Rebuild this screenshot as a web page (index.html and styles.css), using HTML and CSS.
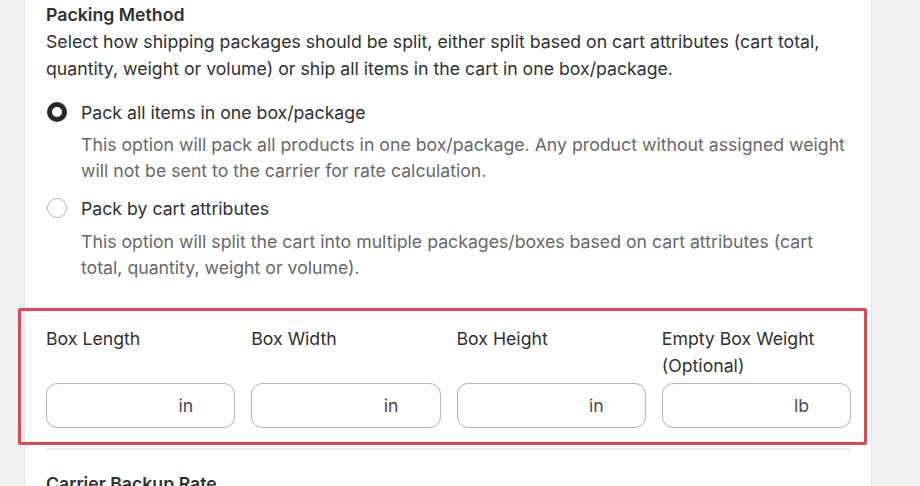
FILE: index.html
```html
<!DOCTYPE html>
<html lang="en">
<head>
<meta charset="utf-8">
<link rel="stylesheet" href="styles.css">
</head>
<body>
<div class="page">
  <section class="card">
    <h2 class="title">Packing Method</h2>
    <p class="intro">Select how shipping packages should be split, either split based on cart attributes (cart total, quantity, weight or volume) or ship all items in the cart in one box/package.</p>

    <div class="option">
      <div class="option-row">
        <span class="radio radio-on"></span>
        <span class="option-label">Pack all items in one box/package</span>
      </div>
      <p class="option-desc">This option will pack all products in one box/package. Any product without assigned weight will not be sent to the carrier for rate calculation.</p>
    </div>

    <div class="option option-second">
      <div class="option-row">
        <span class="radio"></span>
        <span class="option-label">Pack by cart attributes</span>
      </div>
      <p class="option-desc">This option will split the cart into multiple packages/boxes based on cart attributes (cart total, quantity, weight or volume).</p>
    </div>

    <div class="dims">
      <div class="field">
        <div class="field-label">Box Length</div>
        <div class="input"><span class="unit">in</span></div>
      </div>
      <div class="field">
        <div class="field-label">Box Width</div>
        <div class="input"><span class="unit">in</span></div>
      </div>
      <div class="field">
        <div class="field-label">Box Height</div>
        <div class="input"><span class="unit">in</span></div>
      </div>
      <div class="field">
        <div class="field-label">Empty Box Weight (Optional)</div>
        <div class="input"><span class="unit">lb</span></div>
      </div>
      <div class="highlight"></div>
    </div>

    <div class="divider"></div>

    <h2 class="title next">Carrier Backup Rate</h2>
  </section>
</div>
</body>
</html>
```

FILE: styles.css
```css
* { box-sizing: border-box; }

html, body {
  margin: 0;
  padding: 0;
  background: #f1f1f3;
  height: 486px;
  overflow: hidden;
}

body {
  font-family: Inter, "Noto Sans", sans-serif;
  color: #303030;
  font-size: 17.7px;
}

.page {
  padding-left: 24px;
}

.card {
  width: 848px;
  min-height: 520px;
  background: #ffffff;
  border-left: 1px solid #e4e4e6;
  border-right: 1px solid #e4e4e6;
  padding: 3px 20px 0 21px;
}

.title {
  margin: 0;
  font-size: 17.7px;
  font-weight: 600;
  line-height: 24px;
  color: #303030;
}

.intro {
  margin: 1px 0 0;
  line-height: 27px;
  color: #303030;
}

.option {
  margin-top: 17px;
}

.option-second {
  margin-top: 11px;
}

.option-row {
  display: flex;
  align-items: center;
  gap: 14px;
  height: 26px;
  padding-left: 1px;
}

.radio {
  width: 20px;
  height: 20px;
  border-radius: 50%;
  border: 1px solid #b4b4b4;
  background: #fff;
  flex: none;
}

.radio-on {
  border: 5px solid #282828;
}

.option-label {
  color: #303030;
}

.option-desc {
  margin: 7px 0 0 35px;
  line-height: 26px;
  color: #686868;
}

.option-second .option-desc {
  margin-top: 8px;
}

.dims {
  position: relative;
  margin-top: 44px;
  display: grid;
  grid-template-columns: repeat(4, 1fr);
  column-gap: 16px;
}

.field {
  display: flex;
  flex-direction: column;
}

.field-label {
  flex: 1;
  line-height: 27px;
  padding-right: 20px;
  margin-bottom: 4px;
  color: #303030;
}

.input {
  height: 45px;
  border: 1px solid #b3b3b3;
  border-radius: 11px;
  background: #fdfdfd;
  display: flex;
  align-items: center;
  justify-content: flex-end;
  padding-right: 41px;
}

.unit {
  color: #4a4a4a;
}

.highlight {
  position: absolute;
  left: -28px;
  right: -16px;
  top: -17px;
  bottom: -17px;
  border: 3px solid #dc4a50;
  border-radius: 2px;
  pointer-events: none;
}

.divider {
  margin-top: 20px;
  height: 2px;
  background: #ececec;
}

.next {
  margin-top: 22px;
}
```
